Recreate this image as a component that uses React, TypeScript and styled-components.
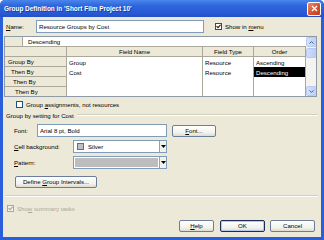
import styled, { createGlobalStyle, css } from 'styled-components';

const GlobalStyle = createGlobalStyle`
  html, body {
    margin: 0;
    padding: 0;
  }
  body {
    width: 324px;
    height: 240px;
    overflow: hidden;
    background: #ffffff;
    font-family: 'Liberation Sans', Arial, sans-serif;
    font-size: 6.1px;
    color: #000;
  }
`;

const Window = styled.div`
  width: 324px;
  height: 240px;
  box-sizing: border-box;
  display: flex;
  flex-direction: column;
  background: #2a5edb;
  border-radius: 5px 5px 0 0;
  overflow: hidden;
`;

const TitleBar = styled.div`
  height: 17px;
  flex: none;
  display: flex;
  align-items: center;
  justify-content: space-between;
  padding: 0 3px 0 4px;
  background: linear-gradient(#4a86ec 0%, #2d65dc 35%, #2759d3 80%, #2250c8 100%);
`;

const Title = styled.span`
  color: #fff;
  font-weight: bold;
  font-size: 6.45px;
  text-shadow: 1px 1px 0 #163c9a;
`;

const CloseButton = styled.div`
  width: 12px;
  height: 12px;
  border: 1px solid #fff;
  border-radius: 2px;
  background: linear-gradient(135deg, #e88a6c, #d4502a 60%, #c2401e);
  display: grid;
  place-items: center;
`;

const Client = styled.div`
  flex: 1;
  margin: 0 3px 3px;
  background: #ece9d8;
  display: flex;
  flex-direction: column;
`;

const Row = styled.div<{ $top: number; $height: number; $pad?: number }>`
  ${({ $top, $height, $pad = 0 }) => css`
    margin-top: ${$top}px;
    height: ${$height}px;
    padding-left: ${$pad}px;
    display: flex;
    align-items: center;
    flex: none;
  `}
`;

const FieldLabel = styled.span<{ $width: number }>`
  width: ${({ $width }) => $width}px;
  flex: none;
  white-space: nowrap;
`;

const TextBox = styled.div<{ $width: number }>`
  width: ${({ $width }) => $width}px;
  height: 13px;
  box-sizing: border-box;
  border: 1px solid #7f9db9;
  background: #fff;
  display: flex;
  align-items: center;
  padding-left: 2px;
  white-space: nowrap;
`;

const CheckWrap = styled.span<{ $disabled?: boolean; $left?: number }>`
  display: inline-flex;
  align-items: center;
  gap: 3px;
  margin-left: ${({ $left = 0 }) => $left}px;
  color: ${({ $disabled }) => ($disabled ? '#aca899' : '#000')};
  white-space: nowrap;
`;

const Box = styled.span<{ $disabled?: boolean }>`
  width: 7px;
  height: 7px;
  box-sizing: border-box;
  border: 1px solid ${({ $disabled }) => ($disabled ? '#aca899' : '#1c5180')};
  background: ${({ $disabled }) => ($disabled ? '#f4f3ee' : '#fff')};
  display: grid;
  place-items: center;
`;

function Checkbox({ checked, disabled, left, children }: { checked?: boolean; disabled?: boolean; left?: number; children: React.ReactNode }) {
  return (
    <CheckWrap $disabled={disabled} $left={left}>
      <Box $disabled={disabled}>
        {checked && (
          <svg width="5" height="5" viewBox="0 0 5 5">
            <path d="M0.5 2.2 L2 3.7 L4.6 0.9" fill="none" stroke={disabled ? '#a8a497' : '#202020'} strokeWidth="1.2" />
          </svg>
        )}
      </Box>
      <span>{children}</span>
    </CheckWrap>
  );
}

/* grid of group fields */
const Table = styled.div`
  margin: 3px 4px 0 1px;
  height: 61px;
  flex: none;
  box-sizing: border-box;
  border: 1px solid #8e9aa8;
  background: #fff;
  display: flex;
  overflow: hidden;
`;

const TableMain = styled.div`
  flex: 1;
  display: flex;
  flex-direction: column;
`;

const EditRow = styled.div`
  height: 10px;
  display: flex;
  flex: none;
`;

const Corner = styled.div`
  width: 18px;
  box-sizing: border-box;
  background: #ece9d8;
  border-right: 1px solid #aca899;
  border-bottom: 1px solid #aca899;
`;

const EditCell = styled.div`
  flex: 1;
  padding-left: 5px;
  display: flex;
  align-items: center;
  border-bottom: 1px solid #aca899;
`;

const Grid = styled.div`
  flex: 1;
  display: grid;
  grid-template-columns: 62px 136px 51px 52px;
  grid-template-rows: 10px 10px 10px 10px 1fr;
`;

const HeadCell = styled.div`
  background: #ece9d8;
  border-right: 1px solid #aca899;
  border-bottom: 1px solid #aca899;
  display: flex;
  align-items: center;
  justify-content: center;
`;

const RowHead = styled.div<{ $indent: number; $last?: boolean }>`
  background: #ece9d8;
  border-right: 1px solid #aca899;
  border-bottom: ${({ $last }) => ($last ? 'none' : '1px solid #aca899')};
  padding-left: ${({ $indent }) => $indent}px;
  display: flex;
  align-items: center;
  white-space: nowrap;
`;

const DataCell = styled.div<{ $selected?: boolean }>`
  border-right: 1px solid #aca899;
  padding-left: 2px;
  display: flex;
  align-items: center;
  white-space: nowrap;
  background: ${({ $selected }) => ($selected ? '#000' : '#fff')};
  color: ${({ $selected }) => ($selected ? '#fff' : '#000')};
`;

const ScrollBar = styled.div`
  width: 11px;
  flex: none;
  display: flex;
  flex-direction: column;
  background: #f4f3ef;
`;

const ScrollButton = styled.div`
  height: 10px;
  box-sizing: border-box;
  border: 1px solid #b9cbf3;
  border-radius: 2px;
  background: linear-gradient(90deg, #d4e1fb, #bcd0fa);
  display: grid;
  place-items: center;
`;

const Thumb = styled.div`
  height: 10px;
  margin-top: 1px;
  box-sizing: border-box;
  border: 1px solid #b5c8f2;
  border-radius: 2px;
  background: linear-gradient(90deg, #cfdcfb, #b8ccf8);
`;

const Track = styled.div`
  flex: 1;
`;

const GroupHead = styled.div`
  margin-top: 3px;
  height: 8px;
  padding: 0 3px;
  display: flex;
  align-items: center;
  gap: 3px;
  flex: none;
  white-space: nowrap;
`;

const Rule = styled.div`
  flex: 1;
  height: 0;
  border-top: 1px solid #d0d0bf;
  border-bottom: 1px solid #fff;
`;

const Separator = styled.div`
  margin: 7px 3px 0 2px;
  height: 0;
  flex: none;
  border-top: 1px solid #d0d0bf;
  border-bottom: 1px solid #fff;
`;

const Button = styled.div<{ $width: number; $default?: boolean; $left?: number }>`
  ${({ $width, $default, $left = 0 }) => css`
    width: ${$width}px;
    height: 12px;
    margin-left: ${$left}px;
    box-sizing: border-box;
    border: 1px solid ${$default ? '#1a2c5a' : '#6b7d9c'};
    box-shadow: ${$default ? 'inset 0 0 0 1px #b8c8ec' : 'none'};
    border-radius: 2px;
    background: linear-gradient(#ffffff, #f2f1ea 70%, #dedbcd);
    display: flex;
    align-items: center;
    justify-content: center;
    white-space: nowrap;
  `}
`;

const Combo = styled.div`
  width: 94px;
  height: 13px;
  box-sizing: border-box;
  border: 1px solid #7f9db9;
  background: #fff;
  display: flex;
  align-items: stretch;
`;

const ComboValue = styled.div<{ $fill?: boolean }>`
  flex: 1;
  margin: 1px;
  display: flex;
  align-items: center;
  gap: 4px;
  padding-left: ${({ $fill }) => ($fill ? 0 : 2)}px;
  background: ${({ $fill }) => ($fill ? '#bdbdbd' : '#fff')};
`;

const Swatch = styled.span`
  width: 7px;
  height: 7px;
  box-sizing: border-box;
  border: 1px solid #6d6d6d;
  background: #c0c0c0;
`;

const DropButton = styled.div`
  width: 7px;
  box-sizing: border-box;
  border-left: 1px solid #a0a0a0;
  background: #f2f1ea;
  display: grid;
  place-items: center;
`;

const ButtonBar = styled.div`
  margin-top: 7px;
  height: 13px;
  padding-right: 6px;
  display: flex;
  justify-content: flex-end;
  align-items: center;
  flex: none;
`;

const Arrow = ({ up, color = '#4d6185' }: { up?: boolean; color?: string }) => (
  <svg width="5" height="3" viewBox="0 0 5 3">
    <path d={up ? 'M0.5 2.6 L2.5 0.6 L4.5 2.6' : 'M0.5 0.4 L2.5 2.4 L4.5 0.4'} fill="none" stroke={color} strokeWidth="1" />
  </svg>
);

const DropArrow = () => (
  <svg width="5" height="3" viewBox="0 0 5 3">
    <path d="M0 0 L5 0 L2.5 3 Z" fill="#000" />
  </svg>
);

const rows = [
  { head: 'Group By', indent: 3, name: 'Group', type: 'Resource', order: 'Ascending' },
  { head: 'Then By', indent: 6, name: 'Cost', type: 'Resource', order: 'Descending', selected: true },
  { head: 'Then By', indent: 8, name: '', type: '', order: '' },
  { head: 'Then By', indent: 10, name: '', type: '', order: '' },
];

export default function App() {
  return (
    <>
      <GlobalStyle />
      <Window>
        <TitleBar>
          <Title>Group Definition in 'Short Film Project 10'</Title>
          <CloseButton>
            <svg width="7" height="7" viewBox="0 0 7 7">
              <path d="M1 1 L6 6 M6 1 L1 6" stroke="#fff" strokeWidth="1.4" />
            </svg>
          </CloseButton>
        </TitleBar>
        <Client>
          <Row $top={3} $height={13} $pad={3}>
            <FieldLabel $width={30}>
              <u>N</u>ame:
            </FieldLabel>
            <TextBox $width={168}>Resource Groups by Cost</TextBox>
            <Checkbox checked left={11}>
              Show in <u>m</u>enu
            </Checkbox>
          </Row>

          <Table>
            <TableMain>
              <EditRow>
                <Corner />
                <EditCell>Descending</EditCell>
              </EditRow>
              <Grid>
                <HeadCell />
                <HeadCell>Field Name</HeadCell>
                <HeadCell>Field Type</HeadCell>
                <HeadCell>Order</HeadCell>
                {rows.map((r, i) => [
                  <RowHead key={`h${i}`} $indent={r.indent} $last={i === rows.length - 1}>
                    {r.head}
                  </RowHead>,
                  <DataCell key={`n${i}`}>{r.name}</DataCell>,
                  <DataCell key={`t${i}`}>{r.type}</DataCell>,
                  <DataCell key={`o${i}`} $selected={r.selected}>
                    {r.order}
                  </DataCell>,
                ])}
              </Grid>
            </TableMain>
            <ScrollBar>
              <ScrollButton>
                <Arrow up />
              </ScrollButton>
              <Thumb />
              <Track />
              <ScrollButton>
                <Arrow />
              </ScrollButton>
            </ScrollBar>
          </Table>

          <Row $top={3} $height={8} $pad={13}>
            <Checkbox>
              Group <u>a</u>ssignments, not resources
            </Checkbox>
          </Row>

          <GroupHead>
            <span>Group by setting for Cost</span>
            <Rule />
          </GroupHead>

          <Row $top={5} $height={13} $pad={11}>
            <FieldLabel $width={23}>Font:</FieldLabel>
            <TextBox $width={130}>Arial 8 pt, Bold</TextBox>
            <Button $width={44} $left={5}>
              <span>
                <u>F</u>ont...
              </span>
            </Button>
          </Row>

          <Row $top={3} $height={13} $pad={11}>
            <FieldLabel $width={59}>
              <u>C</u>ell background:
            </FieldLabel>
            <Combo>
              <ComboValue>
                <Swatch />
                Silver
              </ComboValue>
              <DropButton>
                <DropArrow />
              </DropButton>
            </Combo>
          </Row>

          <Row $top={3} $height={13} $pad={11}>
            <FieldLabel $width={59}>
              <u>P</u>attern:
            </FieldLabel>
            <Combo>
              <ComboValue $fill />
              <DropButton>
                <DropArrow />
              </DropButton>
            </Combo>
          </Row>

          <Row $top={6} $height={13} $pad={12}>
            <Button $width={82}>
              <span>
                Define <u>G</u>roup Intervals...
              </span>
            </Button>
          </Row>

          <Separator />

          <Row $top={8} $height={7} $pad={4}>
            <Checkbox checked disabled>
              Sho<u>w</u> summary tasks
            </Checkbox>
          </Row>

          <ButtonBar>
            <Button $width={35}>
              <span>
                <u>H</u>elp
              </span>
            </Button>
            <Button $width={45} $left={6} $default>
              OK
            </Button>
            <Button $width={45} $left={5}>
              Cancel
            </Button>
          </ButtonBar>
        </Client>
      </Window>
    </>
  );
}
